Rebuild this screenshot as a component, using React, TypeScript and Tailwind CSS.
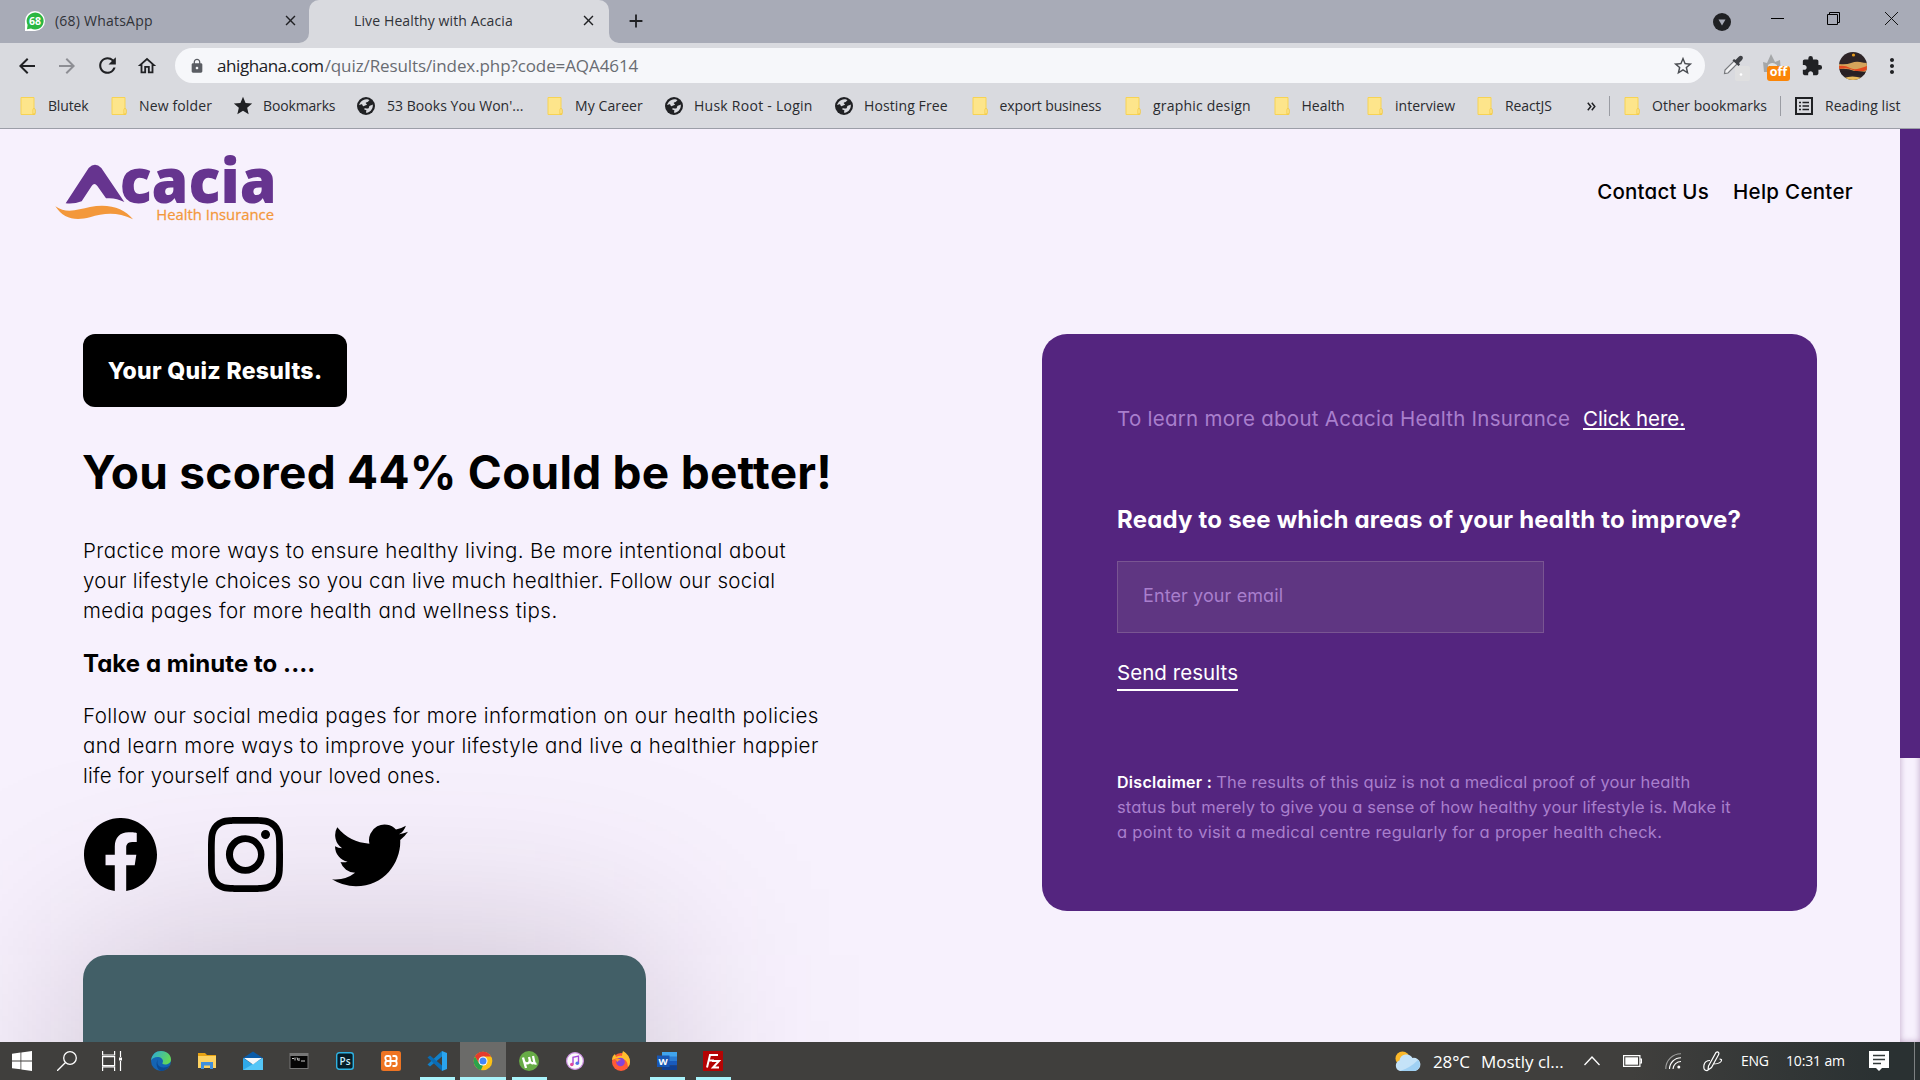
import type { ReactNode } from "react";
import { BsFacebook, BsInstagram, BsTwitter } from "react-icons/bs";
import { MdArrowBack, MdArrowForward, MdRefresh, MdOutlineHome, MdLock, MdStarOutline, MdStar, MdExtension, MdMoreVert, MdClose, MdAdd } from "react-icons/md";

/* ---------- Browser chrome ---------- */

function FolderIcon() {
  return (
    <svg className="h-[18px] w-[16px]" viewBox="0 0 16 18">
      <path d="M1 .5h13v12h1v5H1z" fill="#fde58b" stroke="#f7d354" />
      <path d="M13 17.2v-4.5q0-1.2 1-1.2t1 1.2V16q0 1.2-2 1.2z" fill="#fff0a8" stroke="#f1c232" strokeWidth=".8" />
    </svg>
  );
}

const folder = <FolderIcon />;
const globe = (
  <svg className="h-[18px] w-[18px]" viewBox="0 0 18 18">
    <circle cx="9" cy="9" r="9" fill="#202124" />
    <path d="M6.500 3C8.500 1.600 11.800 2.200 12.500 3.300 11.500 4 11 5.200 9.800 5.200 8.600 5.200 8.500 6.300 9.300 6.800 10.500 7.500 9.800 8.300 8.800 8.300 7.600 8.300 7.500 9.200 6.500 9.200 5.300 9.200 6 7.800 4.800 7.300 3.800 7 3.200 8 2.200 8 2.500 5.800 4.500 3.800 6.500 3z" fill="#d9dadf" />
    <path d="M15.800 7.500C16.200 11 14 14.800 10.200 15.700 9 15.900 8.600 15 9.300 14.200 9.900 13.500 9 12.800 8 12.700 7 12.600 6.900 11.300 8 11.200 9.500 11.100 10.500 11.800 11.500 11.200 12.600 10.500 11.600 9.300 12.800 8.800 13.800 8.500 14.500 8.200 15.800 7.500z" fill="#d9dadf" />
  </svg>
);

const bookmarks: { label: string; icon: ReactNode; text: string }[] = [
  { label: "Blutek", icon: folder, text: "tracking-[-0.17px]" },
  { label: "New folder", icon: folder, text: "tracking-[0.14px]" },
  { label: "Bookmarks", icon: <MdStar className="-ml-[3px] size-[22px] text-[#202124]" />, text: "tracking-[-0.15px]" },
  { label: "53 Books You Won'...", icon: globe, text: "tracking-[0.04px] pl-[2px]" },
  { label: "My Career", icon: folder, text: "tracking-[0.1px]" },
  { label: "Husk Root - Login", icon: globe, text: "tracking-[0.26px] pl-px" },
  { label: "Hosting Free", icon: globe, text: "tracking-[0.1px] pl-px" },
  { label: "export business", icon: folder, text: "tracking-[-0.12px]" },
  { label: "graphic design", icon: folder, text: "tracking-[0.2px]" },
  { label: "Health", icon: folder, text: "tracking-[0.02px]" },
  { label: "interview", icon: folder, text: "tracking-[0.02px]" },
  { label: "ReactJS", icon: folder, text: "tracking-[-0.1px]" },
];

function TabStrip() {
  return (
    <div className="flex h-[43px] bg-[#a8abb7] text-sm text-[#303238]">
      <div className="flex w-[309px] items-center pb-[2px] pl-[25px]">
        <svg className="size-5" viewBox="0 0 20 20">
          <path d="M0 20V10a10 10 0 1 1 10 10z" fill="#fff" />
          <path d="M2 18.300 2.600 14A8.500 8.500 0 1 1 6 17.500z" fill="#2bb741" />
          <text x="10" y="13.800" textAnchor="middle" fontSize="10.500" fontWeight="700" fill="#fff" fontFamily="Open Sans, sans-serif">68</text>
        </svg>
        <span className="ml-[10px] tracking-[0.22px]">(68) WhatsApp</span>
        <MdClose className="mr-[10px] ml-auto size-[17px] text-[#202124]" />
      </div>
      <div className="relative flex w-[300px] items-center rounded-t-[10px] bg-[#d9dadf] pb-[2px] pl-[45px]">
        <svg className="absolute bottom-0 -left-[10px] size-[10px]" viewBox="0 0 10 10"><path d="M10 0v10H0A10 10 0 0 0 10 0z" fill="#d9dadf" /></svg>
        <svg className="absolute -right-[10px] bottom-0 size-[10px]" viewBox="0 0 10 10"><path d="M0 0v10h10A10 10 0 0 1 0 0z" fill="#d9dadf" /></svg>
        <span className="tracking-[0.12px]">Live Healthy with Acacia</span>
        <MdClose className="mr-[12px] ml-auto size-[17px] text-[#202124]" />
      </div>
      <div className="flex w-[54px] items-center justify-center pb-px">
        <MdAdd className="size-[22px] text-[#202124]" />
      </div>
      <div className="ml-auto flex items-center pb-[6px]">
        <svg className="mt-[6px] mr-[40px] size-[18px]" viewBox="0 0 18 18">
          <circle cx="9" cy="9" r="9" fill="#202124" />
          <path d="M5.500 6.500h7L9 12.500z" fill="#a8abb7" />
        </svg>
        <div className="mr-[43px] h-px w-[13px] bg-black" />
        <svg className="mr-[45px] size-[13px]" viewBox="0 0 13 13" fill="none" stroke="#000">
          <path d="M.5 2.500h10v10H.5zM2.500 2.500v-2h10v10h-2" />
        </svg>
        <svg className="mr-[22px] size-[13px]" viewBox="0 0 13 13" stroke="#111"><path d="m0 0 13 13M13 0 0 13" /></svg>
      </div>
    </div>
  );
}

function Toolbar() {
  return (
    <div className="flex h-[45px] items-center pl-[7px]">
      <div className="flex w-10 justify-center"><MdArrowBack className="size-[24px] text-[#202124]" /></div>
      <div className="flex w-10 justify-center"><MdArrowForward className="size-[24px] text-[#8d8e94]" /></div>
      <div className="flex w-10 justify-center"><MdRefresh className="size-[25px] text-[#202124]" /></div>
      <div className="flex w-10 justify-center"><MdOutlineHome className="size-[22px] text-[#202124]" /></div>
      <div className="ml-[8px] flex h-[35px] w-[1530px] items-center rounded-full bg-[#f6f7fa] pl-[14px] text-[17px]">
        <MdLock className="size-[16px] text-[#5a5d63]" />
        <div className="ml-[12px] flex whitespace-nowrap">
          <span className="tracking-[-0.42px] text-[#202124]">ahighana.com</span>
          <span className="pl-[1px] tracking-[-0.1px] text-[#696c72]">/quiz/Results/index.php?code=AQA4614</span>
        </div>
        <MdStarOutline className="mr-[11px] ml-auto size-[22px] text-[#4a4d52]" />
      </div>
      <svg className="ml-[18px] h-[30px] w-[27px]" viewBox="0 0 27 30">
        <path d="M1.500 22.500 2 19 11.500 9.500 14.500 12.500 5 22z" fill="#f2f2f4" stroke="#77797d" strokeWidth="1.200" />
        <path d="M9.500 9.500 11 8l1.500 1 3.200-3.200Q17.500 4 19.300 5.300 20.800 7 19 9L16 12l1 1.500-1.500 1.500z" fill="#3e4045" />
        <rect x="12" y="15" width="15" height="15" rx="2" fill="#dfdfe0" />
        <circle cx="18" cy="23.500" r="1.300" fill="#fff" />
      </svg>
      <div className="relative ml-[13px] h-[30px] w-[27px]">
        <svg className="h-[24px] w-[19px]" viewBox="0 0 19 24">
          <path d="m1 21-1-10 4 1L8 3l4 8 5-2 1 12z" fill="#a5a7a9" />
          <path d="M5 14Q9 10 14 14v6H5z" fill="#e1e1e1" />
          <path d="M6 16h2M11 16h2" stroke="#333" strokeWidth="1.800" />
        </svg>
        <div className="absolute right-0 bottom-0 flex h-[15px] w-[23px] items-center justify-center rounded-[3px] bg-[#fb8507] pb-px text-[12.500px] font-bold text-white">off</div>
      </div>
      <MdExtension className="ml-[11px] size-[22px] text-[#202124]" />
      <svg className="ml-[16px] size-[28px]" viewBox="0 0 28 28">
        <clipPath id="avatar"><circle cx="14" cy="14" r="14" /></clipPath>
        <g clipPath="url(#avatar)">
          <rect width="28" height="28" fill="#2d2427" />
          <circle cx="14.500" cy="3" r="1.600" fill="#e59a1c" />
          <path d="M0 12q7 1 12-1t9-1 7 1v8q-7 3-13 0T0 17z" fill="#d5a35a" />
          <path d="M0 14q6-1 11 2t17-2v4q-8 3-14 0T0 17z" fill="#e2481f" />
          <path d="M0 19q13-1 28 1v3H0z" fill="#282024" />
          <path d="M5 26q8-3 18 0v2H5z" fill="#e8b95a" />
        </g>
      </svg>
      <MdMoreVert className="ml-[13px] size-[24px] text-[#202124]" />
    </div>
  );
}

function BookmarksBar() {
  return (
    <div className="flex h-[41px] items-center border-b border-[#9c9ea8] pb-[4px] pl-[20px] text-sm whitespace-nowrap text-[#2a2b2f]">
      <div className="grid grid-cols-[91px_124px_122px_190px_118px_170px_136.5px_153.5px_148.5px_93.5px_110px_110px]">
        {bookmarks.map((b) => (
          <div key={b.label} className="flex items-center">
            <span className="w-[28px] shrink-0">{b.icon}</span>
            <span className={b.text}>{b.label}</span>
          </div>
        ))}
      </div>
      <svg className="h-[9px] w-[9px]" viewBox="0 0 9 9" fill="none" stroke="#202124" strokeWidth="1.500"><path d="m.8.8 3 3.700-3 3.700M4.800.8l3 3.700-3 3.700" /></svg>
      <div className="ml-[13px] h-[20px] w-px bg-[#9a9ca3]" />
      <span className="ml-[14px] w-[28px]">{folder}</span>
      <span>Other bookmarks</span>
      <div className="ml-[13px] h-[20px] w-px bg-[#9a9ca3]" />
      <svg className="ml-[14px] size-[18px]" viewBox="0 0 18 18" fill="none" stroke="#202124">
        <rect x="1" y="1" width="16" height="16" strokeWidth="2" />
        <path d="M4 5.500h2M7.500 5.500H14M4 9h2M7.500 9H14M4 12.500h2M7.500 12.500H14" strokeWidth="1.500" />
      </svg>
      <span className="ml-[12px] tracking-[0.05px]">Reading list</span>
    </div>
  );
}

/* ---------- Web page ---------- */

function Logo() {
  return (
    <svg className="mb-[6px] h-[67px] w-[220px] overflow-visible" viewBox="165 75 660 201" fontFamily="Open Sans, sans-serif">
      <path d="M197 220 266 114Q285 95 304 114L373 216Q347 202 318 205L292 168Q283 156 275 168L245 214Q222 223 197 220Z" fill="#66348f" />
      <path d="M166 229C200 253 235 238 270 231 330 220 372 236 399 268 350 244 310 250 270 262 225 274 190 266 166 229Z" fill="#f3983b" />
      <text x="359" y="220" fontSize="186" fontWeight="800" textLength="471" lengthAdjust="spacingAndGlyphs" fill="#66348f">cacia</text>
      <text x="469" y="271" fontSize="46" textLength="353" lengthAdjust="spacingAndGlyphs" fill="#f3983b" stroke="#f3983b" strokeWidth=".8">Health Insurance</text>
    </svg>
  );
}

function Results() {
  return (
    <section className="w-[770px] whitespace-nowrap text-black">
      <div className="flex h-[73px] w-[264px] items-center justify-center rounded-xl bg-black pt-px text-[23px] font-extrabold tracking-[0.32px] text-white">
        Your Quiz Results.
      </div>
      <h1 className="mt-[35px] -ml-px text-[46px] leading-[60px] font-bold tracking-[0.25px]">You scored 44% Could be better!</h1>
      <p className="mt-[34px] text-[20.5px] leading-[30px] font-light">
        <span className="tracking-[0.42px]">Practice more ways to ensure healthy living. Be more intentional about</span><br />
        <span className="tracking-[0.3px]">your lifestyle choices so you can live much healthier. Follow our social</span><br />
        <span className="tracking-[0.47px]">media pages for more health and wellness tips.</span>
      </p>
      <h2 className="mt-[20px] text-2xl leading-[36px] font-bold tracking-[0.05px]">Take a minute to ....</h2>
      <p className="mt-[19px] text-[20.5px] leading-[30px] font-light">
        <span className="tracking-[0.45px]">Follow our social media pages for more information on our health policies</span><br />
        <span className="tracking-[0.44px]">and learn more ways to improve your lifestyle and live a healthier happier</span><br />
        <span className="tracking-[0.23px]">life for yourself and your loved ones.</span>
      </p>
      <div className="mt-[25px] flex h-[76px] items-center pl-px">
        <BsFacebook className="size-[73px]" />
        <BsInstagram className="ml-[51px] size-[75px]" />
        <BsTwitter className="mb-[3px] ml-[49px] size-[76px]" />
      </div>
      <div className="relative mt-[63px] h-[500px] w-[563px]">
        <div className="absolute inset-0 -z-10 bg-[#32102c]/24 blur-[100px]" />
        <div className="h-full rounded-3xl bg-[#425f67]" />
      </div>
    </section>
  );
}

function ImproveCard() {
  return (
    <section className="ml-[189px] h-[577px] w-[775px] rounded-[25px] bg-[#54257f] pt-[70px] pl-[75px] whitespace-nowrap text-white">
      <p className="flex text-[20.5px] leading-[30px]">
        <span className="w-[466px] tracking-[0.27px] text-[#a97fcd]">To learn more about Acacia Health Insurance</span>
        <a className="tracking-[-0.09px] underline decoration-2 underline-offset-2">Click here.</a>
      </p>
      <h2 className="mt-[68px] text-2xl leading-[36px] font-bold tracking-[0.2px]">Ready to see which areas of your health to improve?</h2>
      <div className="mt-[23px] flex h-[72px] w-[427px] items-center border border-[#795592] bg-[#5f3682] pb-[2px] pl-[25px] text-lg tracking-[0.1px] text-[#a97fcd]">
        Enter your email
      </div>
      <a className="mt-[25px] block w-[121px] border-b-2 border-white pb-px text-[20.5px] leading-[30px] tracking-[0.05px]">Send results</a>
      <p className="mt-[79px] text-[16.5px] leading-[25px] text-[#a97fcd]">
        <span className="text-base font-semibold tracking-[0.31px] text-white">Disclaimer :</span>
        <span className="ml-[4px] tracking-[0.13px]">The results of this quiz is not a medical proof of your health</span><br />
        <span className="tracking-[0.16px]">status but merely to give you a sense of how healthy your lifestyle is. Make it</span><br />
        <span className="tracking-[0.26px]">a point to visit a medical centre regularly for a proper health check.</span>
      </p>
    </section>
  );
}

function WebPage() {
  return (
    <main className="isolate flex h-[913px] bg-[#f7f1fd] font-['Inter',sans-serif] [font-feature-settings:'cv11']">
      <div className="h-full w-[1900px] overflow-hidden">
        <header className="flex h-[125px] items-center justify-between pr-[47px] pl-[55px]">
          <Logo />
          <nav className="flex gap-[24px] text-[20.5px] leading-[30px] font-medium text-black">
            <a className="tracking-[0.22px]">Contact Us</a>
            <a className="tracking-[0.29px]">Help Center</a>
          </nav>
        </header>
        <div className="flex pt-[80px] pl-[83px]">
          <Results />
          <ImproveCard />
        </div>
      </div>
      <div className="h-full w-[20px] bg-[#f7f1fd] shadow-[inset_0_0_6px_rgba(80,20,90,0.35)]">
        <div className="h-[629px] bg-[#54257f]" />
      </div>
    </main>
  );
}

/* ---------- Taskbar ---------- */

const apps: { name: string; state?: "open" | "active"; icon: ReactNode }[] = [
  { name: "edge", icon: <><defs><linearGradient id="eg" x1="0" y1="0" x2="1" y2=".4"><stop stopColor="#2aa7dd" /><stop offset="1" stopColor="#62d85a" /></linearGradient></defs><circle cx="10" cy="10" r="10" fill="#1464b4" /><path d="M0 9.500C1 3 5 0 10 0c6 0 10 4 10 8.500 0 3.500-3 5-6 5-2 0-3-.8-2.500-1.500C13 9.500 11 6.500 7.500 6 4 5.700 1.500 7 0 9.500z" fill="url(#eg)" /><path d="M7 8.500c-2 4 1 8.500 6 8 2.500 0 4-1 5.500-2C16 19 12 20 10 20 6 19 4 12 7 8.500z" fill="#0c4a93" /></> },
  { name: "explorer", icon: <><path d="M1 2h7l2 2h9v3H1z" fill="#e7a213" /><path d="M1 5h18v12H1z" fill="#fdd262" /><path d="M4 18v-7h12v7h-3v-3.500H7V18z" fill="#3f8fde" /></> },
  { name: "mail", icon: <><path d="M0 7 10 .5 20 7v3H0z" fill="#0a5ba8" /><path d="M0 7l10 6.500L20 7v12H0z" fill="#2fa9ea" /><path d="m0 19 20-12v12z" fill="#55c6f7" /><path d="M1 7h18l-9 6.500z" fill="#f4f8fb" /></> },
  { name: "terminal", icon: <><path d="M.5 2h19v16H.5z" fill="#777" /><path d="M1.500 5h17v12h-17z" fill="#050505" /><path d="M3 7.500h2M6 6.500v3M8 6.500l1 3M10 7v3M12 10h4" stroke="#ccc" /></> },
  { name: "photoshop", icon: <><rect x="1.700" y="1.700" width="16.600" height="16.600" rx="2.500" fill="#061d28" stroke="#2fb2e2" strokeWidth="1.400" /><text x="10" y="13.500" textAnchor="middle" fontSize="10" fontWeight="600" fill="#c9ecfa">Ps</text></> },
  { name: "xampp", icon: <><rect width="20" height="20" rx="2.500" fill="#ee7423" /><path d="M9.500 8V6.500Q9.500 5 8 5H6Q4.300 5 4.300 7T6 10H14Q15.700 10 15.700 7.500T14 5H11.500M6 10Q4.300 10 4.300 12.500T6 15H8Q9.500 15 9.500 13.500V7M11.500 15H14Q15.700 15 15.700 12.500T14 10" stroke="#fff" strokeWidth="1.900" fill="none" /></> },
  { name: "vscode", state: "open", icon: <><path d="M15 0 20 2v16l-5 2z" fill="#2aa4ef" /><path d="M15 0v5.500L3 15.500.5 13.500z" fill="#1180c9" /><path d="M15 20v-5.500L3 4.500.5 6.500z" fill="#0a6cb4" /></> },
  { name: "chrome", state: "active", icon: <><circle cx="10" cy="10" r="9.300" fill="#fbc116" /><path d="M1.900 5.400A9.300 9.300 0 0 1 18.100 5.400H10L6 12z" fill="#e33b2e" /><path d="M1.900 5.400 6 12.300l4 2.200-2 4.600A9.300 9.300 0 0 1 1.900 5.400z" fill="#2ba24c" /><circle cx="10" cy="10" r="4.500" fill="#fff" /><circle cx="10" cy="10" r="3.500" fill="#4285f4" /></> },
  { name: "utorrent", state: "open", icon: <><circle cx="10" cy="10" r="10" fill="#67ab46" /><path d="M4 6.500 7 17M4.800 9.500c.8 4 6 4 6-.5L10 6M10.500 9c.7 4 4 3.500 4.500 2.500M14 5l1.500 7q.5 1 2 .5" stroke="#fff" strokeWidth="2.300" fill="none" /></> },
  { name: "itunes", icon: <><circle cx="10" cy="10" r="8.400" fill="#fafafa" stroke="#c98be0" strokeWidth="1.200" /><path d="M8 13.500V6.300l5.500-1.200v7" stroke="#a648d8" strokeWidth="1.400" fill="none" /><circle cx="6.800" cy="13.500" r="1.800" fill="#e1489d" /><circle cx="12.300" cy="12.300" r="1.800" fill="#5472e8" /></> },
  { name: "firefox", icon: <><circle cx="10" cy="11" r="9" fill="#ff5a36" /><path d="M1 9q0-4 3-6l1 3q4-2 6-1 0-3 1-5 7 4 7 11 0 3-2 5 0-8-8-9-4 0-8 2z" fill="#ffbd2e" /><circle cx="9.500" cy="11" r="4.300" fill="#8444d8" /><path d="M4 8q4-1 6 1-3 0-3.500 2z" fill="#ff9b2d" /></> },
  { name: "word", state: "open", icon: <><path d="M5 1h15v5H5z" fill="#41a5ee" /><path d="M5 5.500h15V10H5z" fill="#2b7cd3" /><path d="M5 10h15v4.500H5z" fill="#185abd" /><path d="M5 14.500h15V19H5z" fill="#103f91" /><path d="M0 4.500h12.500v11.500H0z" fill="#1857b4" /><text x="6.200" y="13.600" textAnchor="middle" fontSize="9.500" fontWeight="700" fill="#fff">W</text></> },
  { name: "filezilla", state: "open", icon: <><path d="M0 0h20v20H0z" fill="#b40404" /><path d="M4 16.500 7 4h8M5.500 9.500H11M9 10h7l-6 6.500h6" stroke="#fff" strokeWidth="2" fill="none" /></> },
];

function Taskbar() {
  return (
    <footer className="flex h-[38px] items-center bg-linear-to-r from-[#403f3d] from-85% to-[#2a3132] to-98% whitespace-nowrap text-white">
      <div className="flex w-[44px] justify-center">
        <svg className="size-5" viewBox="0 0 20 20" fill="#fff"><path d="M0 2.800 8.500 1.600v7.900H0zM9.300 1.500 20 0v9.500H9.300zM0 10.400h8.500v7.900L0 17.200zM9.300 10.400H20V20L9.300 18.500z" /></svg>
      </div>
      <div className="flex w-[46px] justify-center">
        <svg className="size-5" viewBox="0 0 20 20" fill="none" stroke="#fff" strokeWidth="1.300"><circle cx="13" cy="7" r="6.300" /><path d="M8.500 11.500 0 20" /></svg>
      </div>
      <div className="mr-[4px] flex w-[44px] justify-center">
        <svg className="size-5" viewBox="0 0 20 20" fill="none" stroke="#fff" strokeWidth="1.200"><path d="M.6 0v4h12V0M.6 5.600h12v9H.6zM.6 20v-4h12v4M18.500 0v6M18.500 10v10" /><path d="M17 6.500h3v3h-3z" fill="#fff" stroke="none" /></svg>
      </div>
      {apps.map((a) => (
        <div key={a.name} className={a.state === "active" ? "flex h-full w-[46px] flex-col items-center bg-[#6b6b69]" : "flex h-full w-[46px] flex-col items-center"}>
          <svg className="mt-[9px] size-5" viewBox="0 0 20 20" fontFamily="Open Sans, sans-serif">{a.icon}</svg>
          {a.state && <div className={a.state === "active" ? "mt-auto h-[3px] w-full bg-[#a9f3fb]" : "mt-auto h-[3px] w-[35px] bg-[#a9f3fb]"} />}
        </div>
      ))}
      <svg className="ml-auto h-[20px] w-[26px]" viewBox="0 0 26 20">
        <circle cx="7.500" cy="7.500" r="7" fill="#fbb829" />
        <path d="M5 20a5.500 5.500 0 0 1-.5-10.500A7 7 0 0 1 17.500 7 6.600 6.600 0 0 1 20 20z" fill="#c5e3f8" />
        <path d="M5 20q10-3 18-11a6.600 6.600 0 0 1-3 11z" fill="#9fd0f3" />
      </svg>
      <span className="ml-[12px] w-[48px] pt-px text-[17px] tracking-[-0.15px]">28°C</span>
      <span className="w-[103px] pt-px text-[17px]">Mostly cl...</span>
      <svg className="mr-[23px] h-[10px] w-[16px]" viewBox="0 0 16 10" fill="none" stroke="#fff" strokeWidth="1.300"><path d="m.5 9 7.500-8 7.500 8" /></svg>
      <svg className="mr-[23px] h-[12px] w-[19px]" viewBox="0 0 19 12"><path d="M.6.6h16.300v10.800H.6zM17 4h1.400v4H17" fill="none" stroke="#fff" strokeWidth="1.200" /><path d="M2.300 2.300h12.700v7.400H2.300z" fill="#fff" /></svg>
      <svg className="mr-[22px] size-[16px]" viewBox="0 0 16 16" fill="none" stroke="#fff" strokeWidth="1.100"><path d="M.8 16A15 15 0 0 1 16 .8" opacity=".5" /><path d="M4.500 16A11.500 11.500 0 0 1 16 4.700M8 16a8 8 0 0 1 8-7.500" /><circle cx="13.800" cy="14" r="1.500" fill="#fff" stroke="none" /></svg>
      <svg className="mr-[18px] h-[21px] w-[20px]" viewBox="0 0 20 21" fill="none" stroke="#fff" strokeWidth="1.200"><path d="M5.500 15 13 1.500q1.500-1.200 2.500 0 .8 1 0 2.200L8.500 16.500 5 19zM10 13q6 0 8-2.500 1.500-2.500-1.500-2.500M7 9.500q-5 0-6 4.500-1 6 3.500 5.500" /></svg>
      <span className="w-[45px] text-sm tracking-[-0.25px]">ENG</span>
      <span className="w-[83px] text-sm tracking-[-0.15px]">10:31 am</span>
      <svg className="mr-[25px] h-[20px] w-[20px]" viewBox="0 0 20 20"><path d="M0 0h20v17h-7l-3 3-3-3H0z" fill="#fff" /><path d="M4 4.500h12M4 8.500h12M4 12.500h8" stroke="#333a3a" strokeWidth="1.300" /></svg>
      <div className="mr-[5px] h-full w-px bg-[#7d8182]" />
    </footer>
  );
}

export default function App() {
  return (
    <div className="h-[1080px] w-[1920px] overflow-hidden font-['Open_Sans',sans-serif]">
      <div className="h-[129px] bg-[#d9dadf]">
        <TabStrip />
        <Toolbar />
        <BookmarksBar />
      </div>
      <WebPage />
      <Taskbar />
    </div>
  );
}
